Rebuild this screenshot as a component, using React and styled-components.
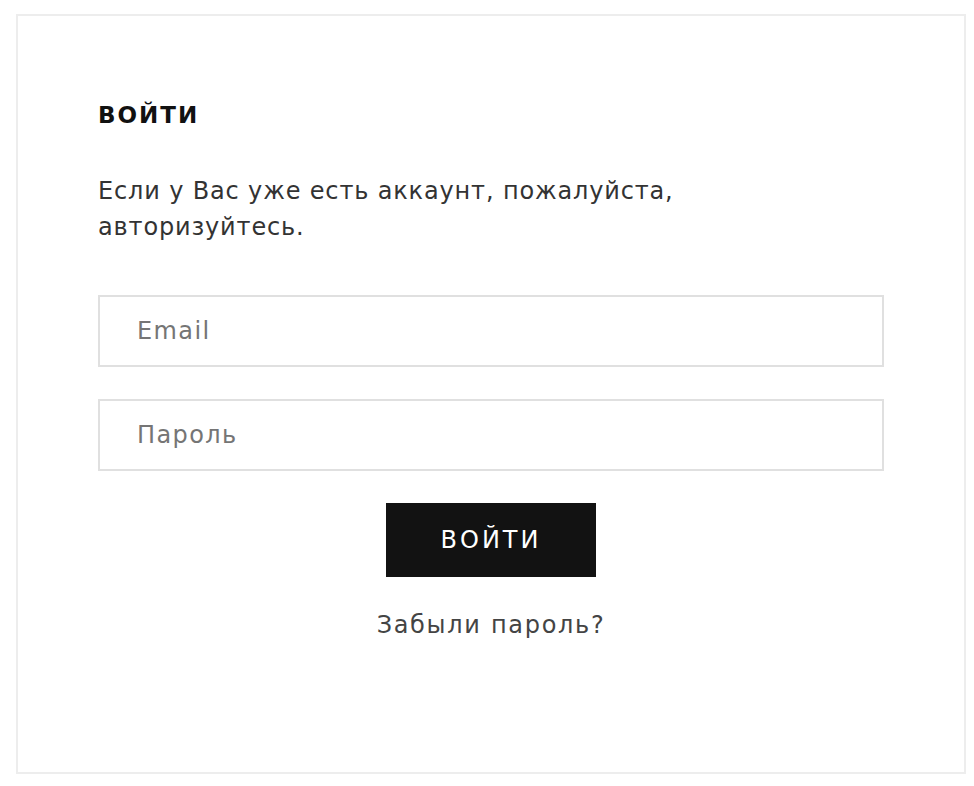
import React from 'react'
import styled, { createGlobalStyle } from 'styled-components'

const font = '"DejaVu Sans", "Liberation Sans", sans-serif'

const GlobalStyle = createGlobalStyle`
  html, body {
    margin: 0;
    padding: 0;
    background: #fff;
  }

  body {
    font-family: ${font};
    color: #333;
  }

  * {
    box-sizing: border-box;
  }
`

const Page = styled.div`
  padding: 14px 8px 13px 16px;
`

const Card = styled.div`
  border: 2px solid #ededed;
  padding: 81px 80px 129px;
  display: flex;
  flex-direction: column;
`

const Title = styled.h2`
  margin: 0;
  font-size: 23px;
  line-height: 36px;
  font-weight: 600;
  letter-spacing: 2px;
  text-transform: uppercase;
  color: #111;
`

const Lead = styled.p`
  margin: 40px 0 50px;
  font-size: 24px;
  line-height: 36px;
  letter-spacing: 0.85px;
  color: #333;
  max-width: 660px;
`

const Form = styled.form`
  display: flex;
  flex-direction: column;
  align-items: center;
  gap: 32px;
`

const Field = styled.input`
  width: 100%;
  height: 72px;
  border: 2px solid #e0e0e0;
  padding: 0 37px;
  font-family: ${font};
  font-size: 24px;
  letter-spacing: 1.4px;
  color: #333;
  outline: none;
  background: #fff;

  &::placeholder {
    color: #757575;
  }
`

const Submit = styled.button`
  width: 210px;
  height: 74px;
  border: 0;
  background: #121212;
  color: #fff;
  font-family: ${font};
  font-size: 24px;
  letter-spacing: 3px;
  text-transform: uppercase;
  cursor: pointer;
`

const Forgot = styled.a`
  margin-top: 30px;
  align-self: center;
  font-size: 24px;
  line-height: 36px;
  letter-spacing: 1.7px;
  color: #444;
  text-decoration: none;
  cursor: pointer;
`

export default function App() {
  return (
    <>
      <GlobalStyle />
      <Page>
        <Card>
          <Title>Войти</Title>
          <Lead>Если у Вас уже есть аккаунт, пожалуйста, авторизуйтесь.</Lead>
          <Form onSubmit={(e) => e.preventDefault()}>
            <Field type="email" placeholder="Email" />
            <Field type="password" placeholder="Пароль" />
            <Submit type="submit">Войти</Submit>
          </Form>
          <Forgot>Забыли пароль?</Forgot>
        </Card>
      </Page>
    </>
  )
}
